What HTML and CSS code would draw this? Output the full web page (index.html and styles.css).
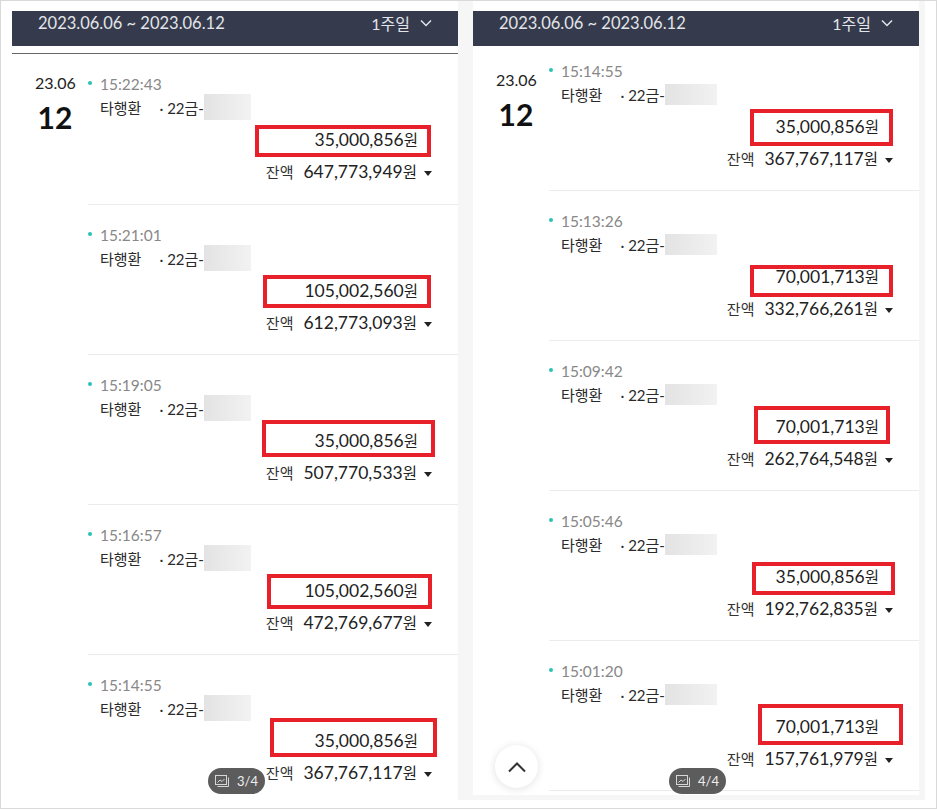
FILE: index.html
```html
<!DOCTYPE html>
<html lang="ko">
  <head>
    <meta charset="UTF-8" />
    <meta name="viewport" content="width=device-width, initial-scale=1.0" />
    <title>거래내역</title>
    <link rel="stylesheet" href="styles.css">
  </head>
  <body>
    <div class="frame">
      <div class="shots">
        <!-- 3/4 -->
        <div class="panel">
          <div class="head">
            <span class="range">2023.06.06 ~ 2023.06.12</span>
            <span class="period">1주일
              <svg width="12" height="8" viewBox="0 0 12 8"><polyline points="1,1.5 6,6.5 11,1.5" fill="none" stroke="#e3e5ea" stroke-width="1.5"/></svg>
            </span>
          </div>
          <div class="body lined">
            <div class="datecol">
              <div class="ym">23.06</div>
              <div class="day">12</div>
            </div>
            <div class="list">
              <div class="row">
                <div class="time">15:22:43</div>
                <div class="name"><span>타행환</span><span class="acct">· 22금-</span><span class="blur"></span></div>
                <div class="amount">35,000,856<span class="won">원</span></div>
                <div class="balance"><span class="label">잔액</span><span class="bal">647,773,949<span class="won">원</span></span><span class="caret"></span></div>
                <span class="mark mark-l1"></span>
              </div>
              <div class="row">
                <div class="time">15:21:01</div>
                <div class="name"><span>타행환</span><span class="acct">· 22금-</span><span class="blur"></span></div>
                <div class="amount">105,002,560<span class="won">원</span></div>
                <div class="balance"><span class="label">잔액</span><span class="bal">612,773,093<span class="won">원</span></span><span class="caret"></span></div>
                <span class="mark mark-l2"></span>
              </div>
              <div class="row">
                <div class="time">15:19:05</div>
                <div class="name"><span>타행환</span><span class="acct">· 22금-</span><span class="blur"></span></div>
                <div class="amount">35,000,856<span class="won">원</span></div>
                <div class="balance"><span class="label">잔액</span><span class="bal">507,770,533<span class="won">원</span></span><span class="caret"></span></div>
                <span class="mark mark-l3"></span>
              </div>
              <div class="row">
                <div class="time">15:16:57</div>
                <div class="name"><span>타행환</span><span class="acct">· 22금-</span><span class="blur"></span></div>
                <div class="amount">105,002,560<span class="won">원</span></div>
                <div class="balance"><span class="label">잔액</span><span class="bal">472,769,677<span class="won">원</span></span><span class="caret"></span></div>
                <span class="mark mark-l4"></span>
              </div>
              <div class="row">
                <div class="time">15:14:55</div>
                <div class="name"><span>타행환</span><span class="acct">· 22금-</span><span class="blur"></span></div>
                <div class="amount">35,000,856<span class="won">원</span></div>
                <div class="balance"><span class="label">잔액</span><span class="bal">367,767,117<span class="won">원</span></span><span class="caret"></span></div>
                <span class="mark mark-l5"></span>
              </div>
            </div>
          </div>
          <div class="pager">
            <svg width="15" height="13" viewBox="0 0 15 13"><rect x="0.5" y="0.5" width="11" height="9" fill="none" stroke="#d6d6d6"/><polyline points="2.5,7.5 5,5 7,6.5 9.5,4" fill="none" stroke="#d6d6d6"/><polyline points="13.5,2.5 13.5,11.5 2.5,11.5" fill="none" stroke="#d6d6d6"/></svg>
            <span>3/4</span>
          </div>
        </div>

        <div class="strip"></div>

        <!-- 4/4 -->
        <div class="panel short">
          <div class="head">
            <span class="range">2023.06.06 ~ 2023.06.12</span>
            <span class="period">1주일
              <svg width="12" height="8" viewBox="0 0 12 8"><polyline points="1,1.5 6,6.5 11,1.5" fill="none" stroke="#e3e5ea" stroke-width="1.5"/></svg>
            </span>
          </div>
          <div class="body">
            <div class="datecol">
              <div class="ym">23.06</div>
              <div class="day">12</div>
            </div>
            <div class="list">
              <div class="row cut">
                <div class="time">15:14:55</div>
                <div class="name"><span>타행환</span><span class="acct">· 22금-</span><span class="blur"></span></div>
                <div class="amount">35,000,856<span class="won">원</span></div>
                <div class="balance"><span class="label">잔액</span><span class="bal">367,767,117<span class="won">원</span></span><span class="caret"></span></div>
                <span class="mark mark-r1"></span>
              </div>
              <div class="row">
                <div class="time">15:13:26</div>
                <div class="name"><span>타행환</span><span class="acct">· 22금-</span><span class="blur"></span></div>
                <div class="amount">70,001,713<span class="won">원</span></div>
                <div class="balance"><span class="label">잔액</span><span class="bal">332,766,261<span class="won">원</span></span><span class="caret"></span></div>
                <span class="mark mark-r2"></span>
              </div>
              <div class="row">
                <div class="time">15:09:42</div>
                <div class="name"><span>타행환</span><span class="acct">· 22금-</span><span class="blur"></span></div>
                <div class="amount">70,001,713<span class="won">원</span></div>
                <div class="balance"><span class="label">잔액</span><span class="bal">262,764,548<span class="won">원</span></span><span class="caret"></span></div>
                <span class="mark mark-r3"></span>
              </div>
              <div class="row">
                <div class="time">15:05:46</div>
                <div class="name"><span>타행환</span><span class="acct">· 22금-</span><span class="blur"></span></div>
                <div class="amount">35,000,856<span class="won">원</span></div>
                <div class="balance"><span class="label">잔액</span><span class="bal">192,762,835<span class="won">원</span></span><span class="caret"></span></div>
                <span class="mark mark-r4"></span>
              </div>
              <div class="row">
                <div class="time">15:01:20</div>
                <div class="name"><span>타행환</span><span class="acct">· 22금-</span><span class="blur"></span></div>
                <div class="amount">70,001,713<span class="won">원</span></div>
                <div class="balance"><span class="label">잔액</span><span class="bal">157,761,979<span class="won">원</span></span><span class="caret"></span></div>
                <span class="mark mark-r5"></span>
              </div>
              <div class="row"></div>
            </div>
          </div>
          <div class="to-top">
            <svg width="20" height="12" viewBox="0 0 20 12"><polyline points="2,10.5 10,2.5 18,10.5" fill="none" stroke="#333" stroke-width="2"/></svg>
          </div>
          <div class="pager">
            <svg width="15" height="13" viewBox="0 0 15 13"><rect x="0.5" y="0.5" width="11" height="9" fill="none" stroke="#d6d6d6"/><polyline points="2.5,7.5 5,5 7,6.5 9.5,4" fill="none" stroke="#d6d6d6"/><polyline points="13.5,2.5 13.5,11.5 2.5,11.5" fill="none" stroke="#d6d6d6"/></svg>
            <span>4/4</span>
          </div>
        </div>

        <div class="strip thin"></div>
      </div>
    </div>
  </body>
</html>
```

FILE: styles.css
```css
body {
  margin: 0;
  font-family: Lato, "Noto Sans CJK KR", sans-serif;
  background-color: #ffffff;
  color: #222222;
}
.frame {
  width: 937px;
  height: 809px;
  box-sizing: border-box;
  border: 1px solid #d9d9d9;
  padding-left: 11px;
  background-color: #ffffff;
}
.shots {
  display: flex;
  align-items: flex-start;
  height: 799px;
  width: 913px;
  background-color: #f6f6f6;
}
.strip {
  width: 15px;
  flex-shrink: 0;
}
.strip.thin {
  width: 6px;
}

/* panel */
.panel {
  position: relative;
  width: 446px;
  height: 799px;
  flex-shrink: 0;
  padding-top: 10px;
  box-sizing: border-box;
  background-color: #ffffff;
  overflow: hidden;
}
.panel.short {
  height: 794px;
}
.head {
  height: 35px;
  box-sizing: border-box;
  padding: 2px 26px 0 26px;
  display: flex;
  justify-content: space-between;
  align-items: flex-start;
  background-color: #353b4c;
  color: #e3e5ea;
  line-height: 20px;
}
.range {
  font-size: 16.5px;
}
.period {
  display: flex;
  align-items: center;
  gap: 10px;
  font-size: 16px;
  padding-top: 1px;
}
.period svg {
  margin-top: -2px;
}
.body {
  display: flex;
}
.body.lined {
  margin-top: 7px;
  border-top: 1px solid #666666;
}

/* date column */
.datecol {
  width: 76px;
  flex-shrink: 0;
  padding: 24px 0 0 23px;
  box-sizing: border-box;
}
.lined .datecol {
  padding-top: 19px;
}
.ym,
.day {
  width: 40px;
  text-align: center;
}
.ym {
  font-size: 16px;
  line-height: 20px;
  color: #222222;
}
.day {
  margin-top: 7px;
  font-size: 30px;
  line-height: 34px;
  font-weight: bold;
  color: #111111;
}

/* rows */
.list {
  flex: 1;
}
.row {
  position: relative;
  height: 150px;
  box-sizing: border-box;
  padding-top: 20px;
  border-top: 1px solid #ececec;
}
.lined .row:first-child {
  border-top: 0;
}
.row.cut {
  height: 144px;
  padding-top: 15px;
  border-top: 0;
}
.time {
  position: relative;
  padding-left: 12px;
  font-size: 15.5px;
  line-height: 20px;
  color: #888888;
}
.time::before {
  content: "";
  position: absolute;
  left: 0;
  top: 7px;
  width: 4px;
  height: 4px;
  border-radius: 50%;
  background-color: #2bc2b6;
}
.name {
  display: flex;
  align-items: center;
  height: 20px;
  margin-top: 3px;
  padding-left: 12px;
  font-size: 15px;
  color: #2a2a2a;
}
.acct {
  margin-left: 18px;
}
.blur {
  width: 47px;
  height: 26px;
  flex-shrink: 0;
  background: linear-gradient(90deg, #e3e3e3, #f2f2f2);
}
.short .blur {
  width: 52px;
  height: 21px;
}
.amount {
  margin-top: 11px;
  padding-right: 40px;
  text-align: right;
  font-size: 17.5px;
  line-height: 24px;
  color: #1e1e1e;
}
.won {
  font-size: 15.5px;
}
.balance {
  margin-top: 10px;
  padding-right: 26px;
  text-align: right;
  line-height: 20px;
  color: #222222;
}
.label {
  font-size: 15px;
  color: #333333;
  margin-right: 10px;
}
.bal {
  font-size: 17.5px;
}
.caret {
  display: inline-block;
  margin-left: 7px;
  vertical-align: middle;
  border-left: 4px solid transparent;
  border-right: 4px solid transparent;
  border-top: 5px solid #222222;
}

/* red annotation boxes */
.mark {
  position: absolute;
  box-sizing: border-box;
  border: 4px solid #e8202a;
}
.mark-l1 { top: 71px; right: 27px; width: 176px; height: 32px; }
.mark-l2 { top: 70px; right: 27px; width: 168px; height: 33px; }
.mark-l3 { top: 65px; right: 23px; width: 173px; height: 37px; }
.mark-l4 { top: 69px; right: 26px; width: 165px; height: 35px; }
.mark-l5 { top: 63px; right: 21px; width: 167px; height: 39px; }
.mark-r1 { top: 63px; right: 26px; width: 143px; height: 37px; }
.mark-r2 { top: 74px; right: 26px; width: 143px; height: 32px; }
.mark-r3 { top: 65px; right: 29px; width: 136px; height: 38px; }
.mark-r4 { top: 71px; right: 24px; width: 143px; height: 33px; }
.mark-r5 { top: 63px; right: 16px; width: 145px; height: 41px; }

/* overlays */
.pager {
  position: absolute;
  left: 196px;
  bottom: 6px;
  width: 57px;
  height: 26px;
  border-radius: 13px;
  background-color: rgba(70, 70, 70, 0.88);
  display: flex;
  align-items: center;
  justify-content: center;
  gap: 7px;
  color: #eeeeee;
  font-size: 13px;
}
.short .pager {
  bottom: 1px;
}
.to-top {
  position: absolute;
  left: 22px;
  bottom: 7px;
  width: 43px;
  height: 43px;
  border-radius: 50%;
  background-color: #ffffff;
  box-shadow: 0 1px 8px rgba(0, 0, 0, 0.12);
  display: flex;
  align-items: center;
  justify-content: center;
}
```
